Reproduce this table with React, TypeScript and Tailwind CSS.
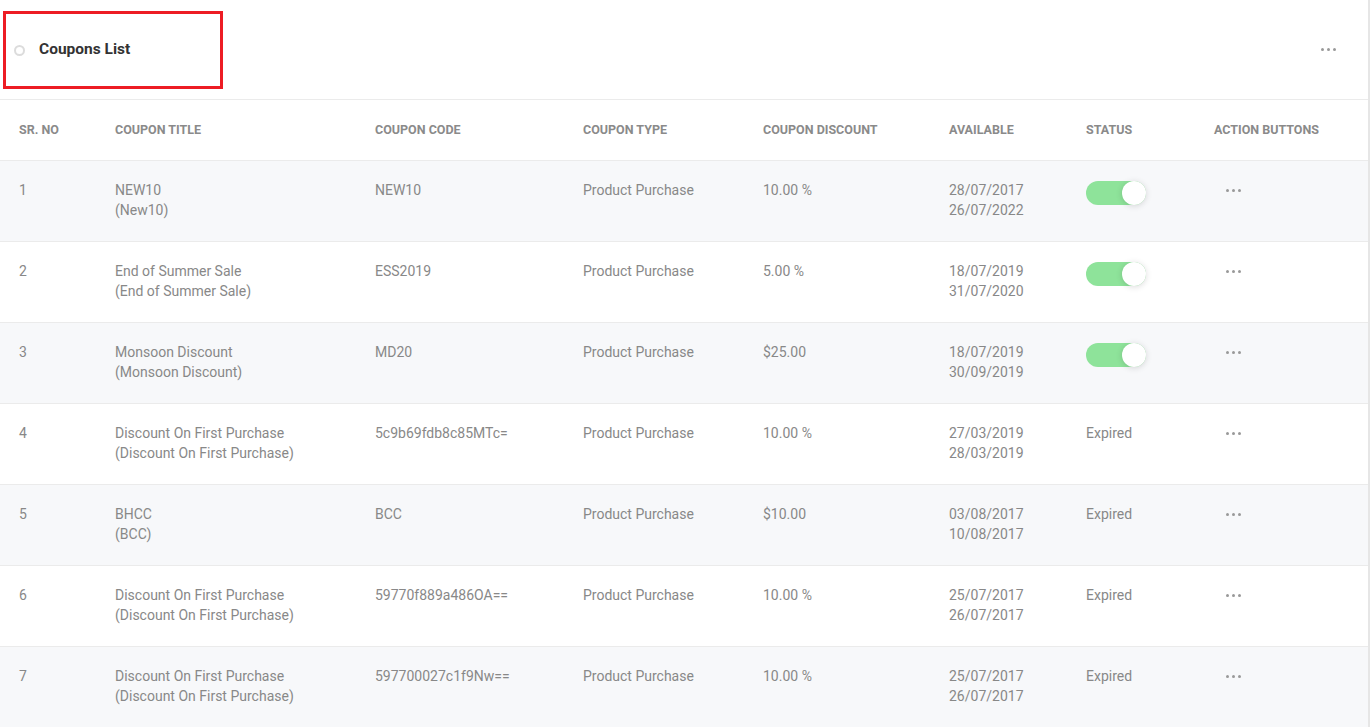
import React from "react";

type Coupon = {
  no: number;
  title: string;
  code: string;
  type: string;
  discount: string;
  from: string;
  to: string;
  active: boolean;
};

const coupons: Coupon[] = [
  { no: 1, title: "NEW10", code: "NEW10", type: "Product Purchase", discount: "10.00 %", from: "28/07/2017", to: "26/07/2022", active: true },
  { no: 2, title: "End of Summer Sale", code: "ESS2019", type: "Product Purchase", discount: "5.00 %", from: "18/07/2019", to: "31/07/2020", active: true },
  { no: 3, title: "Monsoon Discount", code: "MD20", type: "Product Purchase", discount: "$25.00", from: "18/07/2019", to: "30/09/2019", active: true },
  { no: 4, title: "Discount On First Purchase", code: "5c9b69fdb8c85MTc=", type: "Product Purchase", discount: "10.00 %", from: "27/03/2019", to: "28/03/2019", active: false },
  { no: 5, title: "BHCC", code: "BCC", type: "Product Purchase", discount: "$10.00", from: "03/08/2017", to: "10/08/2017", active: false },
  { no: 6, title: "Discount On First Purchase", code: "59770f889a486OA==", type: "Product Purchase", discount: "10.00 %", from: "25/07/2017", to: "26/07/2017", active: false },
  { no: 7, title: "Discount On First Purchase", code: "597700027c1f9Nw==", type: "Product Purchase", discount: "10.00 %", from: "25/07/2017", to: "26/07/2017", active: false },
];

// the parenthesised second line
const subTitles: Record<number, string> = {
  1: "(New10)",
  2: "(End of Summer Sale)",
  3: "(Monsoon Discount)",
  4: "(Discount On First Purchase)",
  5: "(BCC)",
  6: "(Discount On First Purchase)",
  7: "(Discount On First Purchase)",
};

const cols = "grid grid-cols-[96px_260px_208px_180px_186px_137px_128px_1fr] px-[19px]";

const Dots = () => (
  <div className="flex items-center gap-[3px]">
    <span className="w-[3px] h-[3px] rounded-full bg-[#999]" />
    <span className="w-[3px] h-[3px] rounded-full bg-[#999]" />
    <span className="w-[3px] h-[3px] rounded-full bg-[#999]" />
  </div>
);

const Toggle = () => (
  <div className="relative w-[60px] h-[24px] rounded-full bg-[#8ee39a]">
    <div className="absolute right-0 top-0 w-[24px] h-[24px] rounded-full bg-white shadow-[0_1px_6px_rgba(0,0,0,0.15)]" />
  </div>
);

export default function App() {
  return (
    <div className="min-h-screen bg-white font-['Roboto',sans-serif] text-[#888]">
      <div className="w-[1370px] border-r-2 border-[#e6e6e6]">
        {/* Card header */}
        <div className="relative flex items-center justify-between h-[100px] pl-[14px] pr-[32px] border-b border-[#ebebeb]">
          <div className="flex items-center gap-[14px] pt-[1px]">
            <span className="w-[11px] h-[11px] rounded-full border-2 border-[#dcdcdc]" />
            <h1 className="text-[15.5px] font-bold text-[#333]">Coupons List</h1>
          </div>
          <Dots />
          {/* annotation box */}
          <div className="absolute left-[3px] top-[11px] w-[220px] h-[78px] border-[3px] border-[#ed1c24]" />
        </div>

        {/* Table head */}
        <div className={`${cols} h-[61px] items-center border-b border-[#ebebeb] text-[12.5px] font-bold uppercase text-[#8a8a8a]`}>
          <div>Sr. No</div>
          <div>Coupon Title</div>
          <div>Coupon Code</div>
          <div>Coupon Type</div>
          <div>Coupon Discount</div>
          <div>Available</div>
          <div>Status</div>
          <div>Action Buttons</div>
        </div>

        {/* Rows */}
        {coupons.map((c) => (
          <div
            key={c.no}
            className={`${cols} h-[81px] pt-[19px] border-b border-[#ebebeb] text-[14px] leading-[20px] ${c.no % 2 === 1 ? "bg-[#f7f8fa]" : "bg-white"}`}
          >
            <div>{c.no}</div>
            <div>
              <div>{c.title}</div>
              <div>{subTitles[c.no]}</div>
            </div>
            <div>{c.code}</div>
            <div>{c.type}</div>
            <div>{c.discount}</div>
            <div>
              <div>{c.from}</div>
              <div>{c.to}</div>
            </div>
            <div>{c.active ? <div className="pt-[1px]"><Toggle /></div> : "Expired"}</div>
            <div className="pl-[12px] pt-[9px]">
              <Dots />
            </div>
          </div>
        ))}
      </div>
    </div>
  );
}
